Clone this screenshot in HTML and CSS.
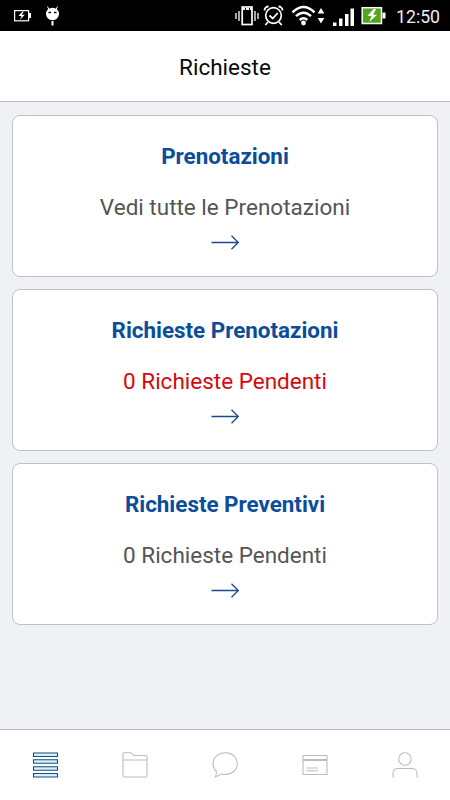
FILE: index.html
```html
<!DOCTYPE html>
<html lang="it">
<head>
<meta charset="utf-8">
<title>Richieste</title>
<link rel="stylesheet" href="styles.css">
</head>
<body>
<div class="app">
  <div class="status">
    <svg class="status-icons" width="390" height="31" viewBox="0 0 390 31" fill="none" stroke="#fff">
      <rect x="14.6" y="10.6" width="14" height="10.2" stroke-width="1.2"/>
      <path d="M29 13h2v5h-2z" fill="#fff" stroke="none"/>
      <path d="M22.5 11.5l-4 4.5h3l-1.7 4 5-5.3h-3l2-3.2z" fill="#fff" stroke="none"/>
      <ellipse cx="52.5" cy="14" rx="6.5" ry="6.2" fill="#fff" stroke="none"/>
      <path d="M49 9.5L47.5 6.5M56 9.5l1.500-3"/>
      <path d="M52.5 21v4.500" stroke-width="2"/>
      <path d="M48.500 12.500h2.500M54 12.500h2.500" stroke="#000" stroke-width="1.400"/>
      <rect x="242.200" y="7" width="9.800" height="17.500" stroke-width="1.700"/>
      <path d="M242 9h10" stroke-width="2" stroke-dasharray="3 1"/>
      <path d="M236 13v6M239 11v10M255 11v10M258 13v6" stroke-width="1.300"/>
      <circle cx="273.500" cy="15.500" r="7.800" stroke-width="1.700"/>
      <path d="M269.500 15.500l3.200 3 5-5.500" stroke-width="1.800"/>
      <path d="M264.500 10.500a4 4 0 0 1 4-4M278.500 6.500a4 4 0 0 1 4 4M268 22l-2.700 3M279 22l2.700 3" stroke-width="1.800"/>
      <path d="M292.500 12.300q11-10.500 22 0M296 16.200q7.500-7 15 0M299.700 20q3.800-3.500 7.600 0" stroke-width="2.500"/>
      <circle cx="303.500" cy="23" r="2.400" fill="#fff" stroke="none"/>
      <path d="M317.700 13.500l3.300-5.500 3.300 5.500zM317.700 18l3.300 5.500 3.300-5.500z" fill="#fff" stroke="none"/>
      <path d="M333 22.500h3.500v3.500H333zM339 18.500h3.500V26H339zM345 14h3.500v12H345zM350.500 8.500h3.500V26h-3.500z" fill="#fff" stroke="none"/>
      <rect x="362.200" y="7.700" width="19.300" height="15.800" fill="#55a51c" stroke-width="1.500"/>
      <path d="M382.500 12.500h3v6h-3z" fill="#fff" stroke="none"/>
      <path d="M373.500 9l-6 7h4l-2.200 6 7.800-7.300h-4l3-5.700z" fill="#fff" stroke="none"/>
    </svg>
    <span class="clock">12:50</span>
  </div>
  <header class="header">Richieste</header>
  <main class="content">
    <section class="card">
      <h2>Prenotazioni</h2>
      <p>Vedi tutte le Prenotazioni</p>
      <svg class="arrow" width="30" height="16" viewBox="0 0 30 16"><path d="M1.500 8.500H28M21.500 1.700L28.300 8.500l-6.800 6.800"/></svg>
    </section>
    <section class="card">
      <h2>Richieste Prenotazioni</h2>
      <p class="alert">0 Richieste Pendenti</p>
      <svg class="arrow" width="30" height="16" viewBox="0 0 30 16"><path d="M1.500 8.500H28M21.500 1.700L28.300 8.500l-6.800 6.800"/></svg>
    </section>
    <section class="card">
      <h2>Richieste Preventivi</h2>
      <p>0 Richieste Pendenti</p>
      <svg class="arrow" width="30" height="16" viewBox="0 0 30 16"><path d="M1.500 8.500H28M21.500 1.700L28.300 8.500l-6.800 6.800"/></svg>
    </section>
  </main>
  <nav class="tabs">
    <a class="tab active"><svg width="28" height="28" viewBox="0 0 28 28"><path d="M2.500 2h24v3.500h-24zM2.500 8.800h24v3.500h-24zM2.500 15.700h24v3.500h-24zM2.500 22.500h24V26h-24z"/></svg></a>
    <a class="tab"><svg width="28" height="28" viewBox="0 0 28 28"><path d="M3 1.800h6.500q1 0 1.600.8L13 4.500h11.500a1.500 1.500 0 0 1 1.500 1.500v18.500a1.500 1.500 0 0 1-1.500 1.500H3.500a1.500 1.500 0 0 1-1.500-1.500V3a1.200 1.200 0 0 1 1-1.200zM2 9h24"/></svg></a>
    <a class="tab"><svg width="28" height="28" viewBox="0 0 28 28"><path d="M14.500 1.800C21 1.800 26.200 6.500 26.200 12.700S21 23.500 14.500 23.500q-2 0-3.800-.6Q8.500 24.500 4.500 25.800q1.200-2.800.7-5.800Q2 17 2 12.700C2 6.500 7.800 1.800 14.500 1.800z"/></svg></a>
    <a class="tab"><svg width="28" height="28" viewBox="0 0 28 28"><path d="M2 4.500h24v19H2zM5.500 17H17M5.500 19.700H17"/><path class="stripe" d="M2 9h24"/></svg></a>
    <a class="tab"><svg width="28" height="28" viewBox="0 0 28 28"><circle cx="14" cy="8" r="6.300"/><path d="M2 26.500V22a4.500 4.500 0 0 1 4.500-4.500h15A4.500 4.500 0 0 1 26 22v4.500"/></svg></a>
  </nav>
</div>
</body>
</html>
```

FILE: styles.css
```css
* { box-sizing: border-box; }
body {
  margin: 0;
  font-family: Roboto, "Liberation Sans", sans-serif;
}
.app {
  width: 450px;
  height: 800px;
  display: flex;
  flex-direction: column;
  background: #eff1f4;
  overflow: hidden;
}
.status {
  height: 31px;
  flex: none;
  display: flex;
  align-items: center;
  background: #000;
}
.status-icons { flex: none; }
.clock {
  margin-left: 6px;
  padding-top: 2px;
  color: #eee;
  font-size: 17.7px;
  line-height: 22px;
}
.header {
  height: 71px;
  flex: none;
  display: flex;
  align-items: center;
  justify-content: center;
  padding-top: 2px;
  background: #fff;
  border-bottom: 1px solid #bdc0c7;
  font-size: 22.5px;
  color: #0a0a0a;
}
.content {
  flex: 1;
  display: flex;
  flex-direction: column;
  gap: 12.7px;
  padding: 13px 12.4px;
}
.card {
  height: 161.5px;
  flex: none;
  display: flex;
  flex-direction: column;
  align-items: center;
  padding-top: 27px;
  background: #fff;
  border: 1px solid #bcc1ca;
  border-radius: 8px;
}
.card h2 {
  margin: 0;
  color: #0a4d9b;
  font-size: 22.4px;
  line-height: 27px;
  font-weight: 700;
}
.card p {
  margin: 24px 0 0;
  color: #555;
  font-size: 22.5px;
  line-height: 27px;
}
.card p.alert { color: #d5090d; }
.arrow {
  margin-top: 13px;
  fill: none;
  stroke: #164c8c;
  stroke-width: 1.3;
}
.tabs {
  height: 71px;
  flex: none;
  display: flex;
  background: #fff;
  border-top: 1px solid #b4b9c2;
}
.tab {
  flex: 1;
  display: flex;
  align-items: center;
  justify-content: center;
}
.tab svg {
  fill: none;
  stroke: #bcbcbc;
  stroke-width: 1.1;
}
.tab.active svg { stroke: #164d7d; fill: #d5f1ff; }
.tab .stripe { stroke-width: 2; }
```
